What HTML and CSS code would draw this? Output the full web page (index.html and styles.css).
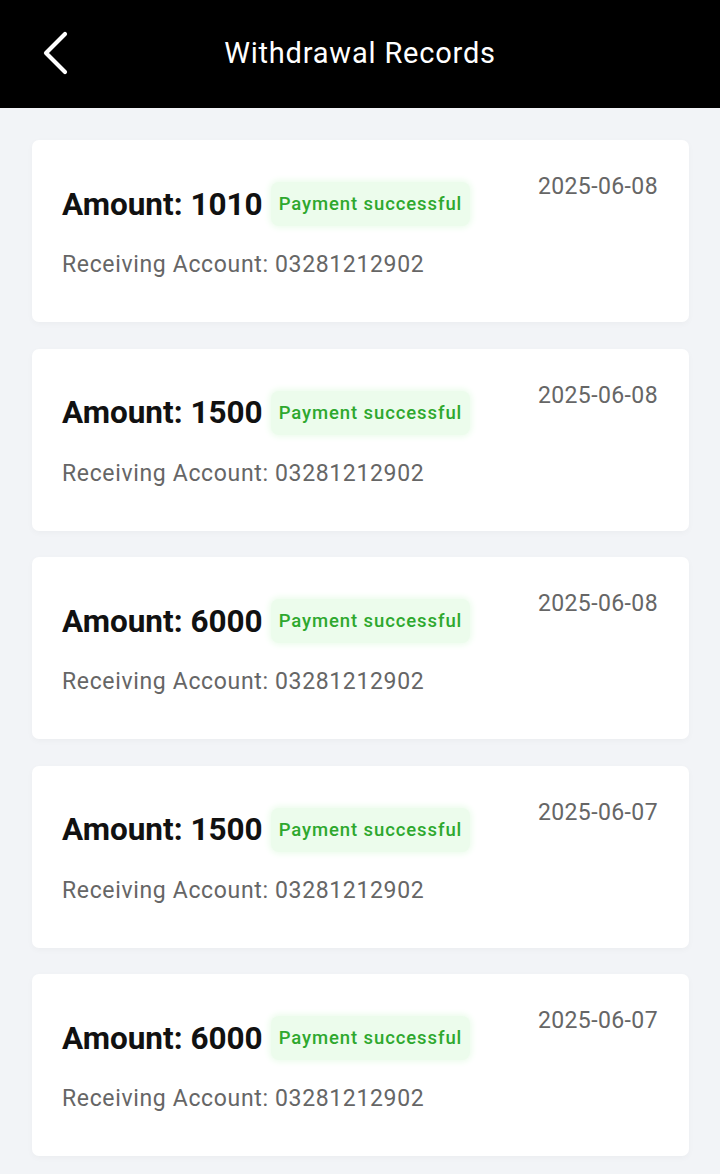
FILE: index.html
```html
<!DOCTYPE html>
<html lang="en">
<head>
    <meta charset="UTF-8">
    <title>Withdrawal Records</title>
    <link rel="stylesheet" href="styles.css">
</head>
<body>
    <div class="header">
        <svg class="back" width="30" height="44" viewBox="0 0 30 44">
            <polyline points="23,3 4,22 23,41" fill="none" stroke="#fff" stroke-width="4.2" stroke-linecap="round" stroke-linejoin="round"/>
        </svg>
        <h1>Withdrawal Records</h1>
    </div>
    <div class="list">
        <div class="card">
            <div class="info">
                <div class="top"><span class="amount">Amount: 1010</span><span class="badge">Payment successful</span></div>
                <div class="account">Receiving Account: 03281212902</div>
            </div>
            <div class="date">2025-06-08</div>
        </div>
        <div class="card">
            <div class="info">
                <div class="top"><span class="amount">Amount: 1500</span><span class="badge">Payment successful</span></div>
                <div class="account">Receiving Account: 03281212902</div>
            </div>
            <div class="date">2025-06-08</div>
        </div>
        <div class="card">
            <div class="info">
                <div class="top"><span class="amount">Amount: 6000</span><span class="badge">Payment successful</span></div>
                <div class="account">Receiving Account: 03281212902</div>
            </div>
            <div class="date">2025-06-08</div>
        </div>
        <div class="card">
            <div class="info">
                <div class="top"><span class="amount">Amount: 1500</span><span class="badge">Payment successful</span></div>
                <div class="account">Receiving Account: 03281212902</div>
            </div>
            <div class="date">2025-06-07</div>
        </div>
        <div class="card">
            <div class="info">
                <div class="top"><span class="amount">Amount: 6000</span><span class="badge">Payment successful</span></div>
                <div class="account">Receiving Account: 03281212902</div>
            </div>
            <div class="date">2025-06-07</div>
        </div>
    </div>
</body>
</html>
```

FILE: styles.css
```css
body { margin: 0; font-family: Roboto, "Liberation Sans", sans-serif; background: #f2f4f7; }
.header { height: 108px; background: #000; display: flex; align-items: center; justify-content: center; position: relative; }
.header h1 { margin: 0 0 2px; color: #fff; font-size: 29px; font-weight: 400; letter-spacing: 0.8px; }
.back { position: absolute; left: 42px; top: 31px; }
.list { padding: 32px 31px 20px 32px; display: flex; flex-direction: column; gap: 26.5px; }
.card { background: #fff; border-radius: 7px; padding: 33px 31px 44px 30px; display: flex; justify-content: space-between; align-items: flex-start; box-shadow: 0 2px 6px rgba(0, 0, 0, 0.03); }
.info { margin-top: 9px; }
.top { display: flex; align-items: center; height: 44px; }
.amount { font-size: 31.5px; font-weight: 700; color: #111; }
.badge { margin-left: 8px; padding: 0 8px; line-height: 44px; font-size: 18.5px; font-weight: 500; letter-spacing: 0.9px; color: #2ea82e; background: #ecfcec; border-radius: 8px; box-shadow: 0 0 6px 2px #ecfcec; }
.account { margin-top: 25px; font-size: 23px; line-height: 27px; letter-spacing: 0.65px; color: #666; }
.date { font-size: 23px; line-height: 27px; letter-spacing: 0.4px; color: #666; }
```
